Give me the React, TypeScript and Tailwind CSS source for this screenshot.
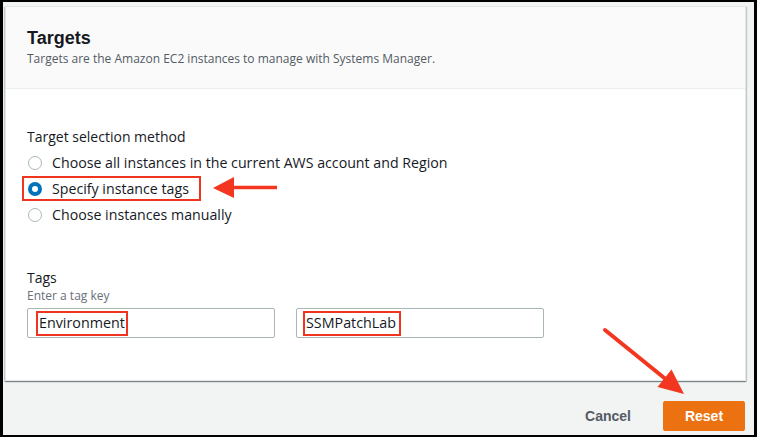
import React from "react";

const options = [
  "Choose all instances in the current AWS account and Region",
  "Specify instance tags",
  "Choose instances manually",
];

function Radio({ checked }: { checked: boolean }) {
  return checked ? (
    <span className="w-[14px] h-[14px] rounded-full border-[4px] border-[#0073bb] bg-white shrink-0" />
  ) : (
    <span className="w-[14px] h-[14px] rounded-full border-[1.5px] border-[#aab7b8] bg-white shrink-0" />
  );
}

export default function App() {
  const selected = 1;

  return (
    <div className="relative w-[757px] h-[437px] overflow-hidden border-y-2 border-x-[3px] border-black bg-[#f2f3f3] font-['Open_Sans','Liberation_Sans',Arial,sans-serif] text-[#16191f]">
      {/* Card */}
      <div className="ml-[2px] mt-[4px] w-[741px] h-[375px] bg-white border border-[#e4e7e7] shadow-[0_1px_1px_0_rgba(0,28,36,0.3),1px_1px_1px_0_rgba(0,28,36,0.15),-1px_1px_1px_0_rgba(0,28,36,0.15)] flex flex-col">
        <div className="h-[82px] bg-[#fafafa] border-b border-[#eaeded] px-[21px] pt-[19px]">
          <h2 className="font-['Liberation_Sans',Arial,sans-serif] font-bold text-[18px] leading-[24px]">Targets</h2>
          <p className="text-[12px] leading-[18px] text-[#545b64]">
            Targets are the Amazon EC2 instances to manage with Systems Manager.
          </p>
        </div>

        <div className="px-[21px] pt-[38px]">
          <div className="text-[14px] leading-[20px] text-[#16191f]">Target selection method</div>
          <div className="mt-[3px] flex flex-col">
            {options.map((label, i) => (
              <div key={label} className="relative h-[26px] flex items-center gap-[10px] pl-[1px]">
                <Radio checked={i === selected} />
                <span className="text-[14.2px] leading-[20px]">{label}</span>
                {i === selected && (
                  <span className="absolute left-[-5px] top-[0px] w-[179px] h-[25px] border-[2.5px] border-[#ef3520]" />
                )}
              </div>
            ))}
          </div>

          <div className="mt-[40px] text-[14px] leading-[20px]">Tags</div>
          <div className="text-[12px] leading-[16px] text-[#687078]">Enter a tag key</div>
          <div className="mt-[4px] flex gap-[21px]">
            <div className="w-[248px] h-[30px] border border-[#aab7b8] rounded-[2px] flex items-center pl-[8px]">
              <span className="border-[2.5px] border-[#ef3520] h-[25px] px-[1px] flex items-center text-[14.3px]">
                Environment
              </span>
            </div>
            <div className="w-[248px] h-[30px] border border-[#aab7b8] rounded-[2px] flex items-center pl-[6px]">
              <span className="border-[2.5px] border-[#ef3520] h-[25px] pl-[1px] pr-[3px] flex items-center text-[14.3px]">
                SSMPatchLab
              </span>
            </div>
          </div>
        </div>
      </div>

      {/* Footer */}
      <div className="mt-[20px] pr-[9px] flex justify-end items-center">
        <button className="mr-[32px] font-['Liberation_Sans',Arial,sans-serif] font-bold text-[14px] text-[#545b64]">
          Cancel
        </button>
        <button className="w-[82px] h-[30px] bg-[#ec7211] border border-[#ec7211] rounded-[2px] font-['Liberation_Sans',Arial,sans-serif] font-bold text-[14px] text-white">
          Reset
        </button>
      </div>

      {/* Annotation arrows */}
      <svg className="absolute left-[-3px] top-[-2px] pointer-events-none" width="757" height="437" viewBox="0 0 757 437">
        <line x1="277" y1="187.5" x2="230" y2="187.5" stroke="#f2361f" strokeWidth="3.5" />
        <polygon points="213,188 234,177 234,198" fill="#f2361f" />
        <line x1="605" y1="330" x2="668" y2="381" stroke="#f2361f" strokeWidth="4" strokeLinecap="round" />
        <polygon points="684,394 657.5,387 671.5,369.5" fill="#f2361f" />
      </svg>
    </div>
  );
}
